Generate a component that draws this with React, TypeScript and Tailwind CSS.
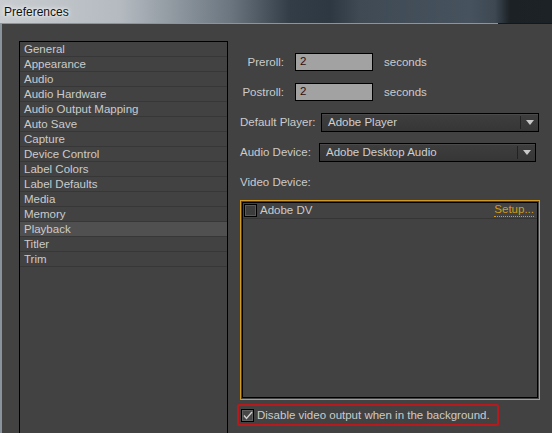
import React from "react";

const categories = [
  "General",
  "Appearance",
  "Audio",
  "Audio Hardware",
  "Audio Output Mapping",
  "Auto Save",
  "Capture",
  "Device Control",
  "Label Colors",
  "Label Defaults",
  "Media",
  "Memory",
  "Playback",
  "Titler",
  "Trim",
];

function Dropdown({ value, width }: { value: string; width: string }) {
  return (
    <div
      className={`flex h-[19px] items-stretch border border-black bg-gradient-to-b from-[#3e3e3e] to-[#363636] shadow-[inset_0_1px_0_#4a4a4a] ${width}`}
    >
      <span className="flex flex-1 items-center pl-[6px] pt-px text-[#cfcfcf]">{value}</span>
      <span className="my-[2px] w-px bg-[#222]" />
      <span className="flex w-[17px] items-center justify-center">
        <svg width="8" height="5" viewBox="0 0 8 5">
          <path d="M0 0h8L4 5z" fill="#c8c8c8" />
        </svg>
      </span>
    </div>
  );
}

function NumberField({ value }: { value: string }) {
  return (
    <div className="flex h-[18px] w-[78px] items-center border border-black bg-[#a2a2a2] pl-[4px] text-[#2a1010]">
      {value}
    </div>
  );
}

export default function App() {
  return (
    <div
      className="flex h-[433px] w-[552px] flex-col overflow-hidden bg-[#424242] text-[11.5px] leading-none text-[#cbcbcb]"
      style={{ fontFamily: '"Liberation Sans", Arial, sans-serif' }}
    >
      {/* Title bar */}
      <div className="flex h-[23px] shrink-0 items-center bg-[linear-gradient(90deg,#c9cdd1_0px,#b4bac0_120px,#6b7680_230px,#333d47_290px,#2e3842_330px,#3f4a55_360px,#46525d_470px,#3d4853_495px,#1c2125_510px,#1d2226_552px)] pl-[4px]">
        <span className="text-[12px] text-[#111] [text-shadow:0_0_6px_#fff,0_0_3px_#fff]">Preferences</span>
      </div>
      <div className="flex h-px shrink-0">
        <div className="w-[498px] bg-[#8d959c]" />
        <div className="flex-1 bg-[#151719]" />
      </div>

      <div className="flex min-h-0 flex-1">
        <div className="w-[2px] bg-[#8a949c]" />
        <div className="flex flex-1 pl-[17px] pt-[17px]">
          {/* Category list */}
          <div className="h-[420px] w-[209px] shrink-0 border border-black bg-[#424242]">
            {categories.map((c) => (
              <div
                key={c}
                className={`flex h-[15px] items-center border-b border-[#373737] pl-[4px] pt-[2px] ${
                  c === "Playback" ? "bg-[#505050]" : ""
                }`}
              >
                {c}
              </div>
            ))}
          </div>

          {/* Settings */}
          <div className="ml-[12px] flex flex-col pt-[12px]">
            <div className="flex items-center">
              <span className="w-[44px] pt-px text-right">Preroll:</span>
              <div className="ml-[11px]">
                <NumberField value="2" />
              </div>
              <span className="ml-[11px] pt-px">seconds</span>
            </div>
            <div className="mt-[12px] flex items-center">
              <span className="w-[44px] pt-px text-right">Postroll:</span>
              <div className="ml-[11px]">
                <NumberField value="2" />
              </div>
              <span className="ml-[11px] pt-px">seconds</span>
            </div>
            <div className="mt-[12px] flex items-center">
              <span className="w-[81px] pt-px">Default Player:</span>
              <Dropdown value="Adobe Player" width="w-[218px]" />
            </div>
            <div className="mt-[11px] flex items-center">
              <span className="w-[79px] pt-px">Audio Device:</span>
              <Dropdown value="Adobe Desktop Audio" width="w-[217px]" />
            </div>
            <div className="mt-[15px] h-[12px]">Video Device:</div>

            {/* Video device list */}
            <div className="mt-[11px] h-[200px] w-[300px] shrink-0 border border-[#d49a1c] p-px">
              <div className="h-full border border-black">
                <div className="flex h-[16px] items-center border-b border-[#353535] pl-[1px] pr-[3px]">
                  <span className="h-[13px] w-[13px] border border-black bg-[#3c3c3c] shadow-[inset_0_0_0_1px_#5a5a5a]" />
                  <span className="ml-[3px] flex-1 pt-px">Adobe DV</span>
                  <span className="border-b border-dotted border-[#d49a1c] pb-px text-[#d49a1c]">Setup...</span>
                </div>
              </div>
            </div>

            {/* Background checkbox */}
            <div className="-ml-[3px] mt-[4px] flex h-[22px] w-[262px] shrink-0 items-center whitespace-nowrap rounded-[2px] border-2 border-[#b8191c] pl-[2px]">
              <span className="flex h-[13px] w-[13px] items-center justify-center border border-black bg-[#474747] shadow-[inset_0_0_0_1px_#606060]">
                <svg width="10" height="9" viewBox="0 0 10 9">
                  <path d="M1 4.5l2.5 3L9 1" stroke="#d0d0d0" strokeWidth="1.4" fill="none" />
                </svg>
              </span>
              <span className="ml-[3px] pt-px">Disable video output when in the background.</span>
            </div>
          </div>
        </div>
      </div>
    </div>
  );
}
